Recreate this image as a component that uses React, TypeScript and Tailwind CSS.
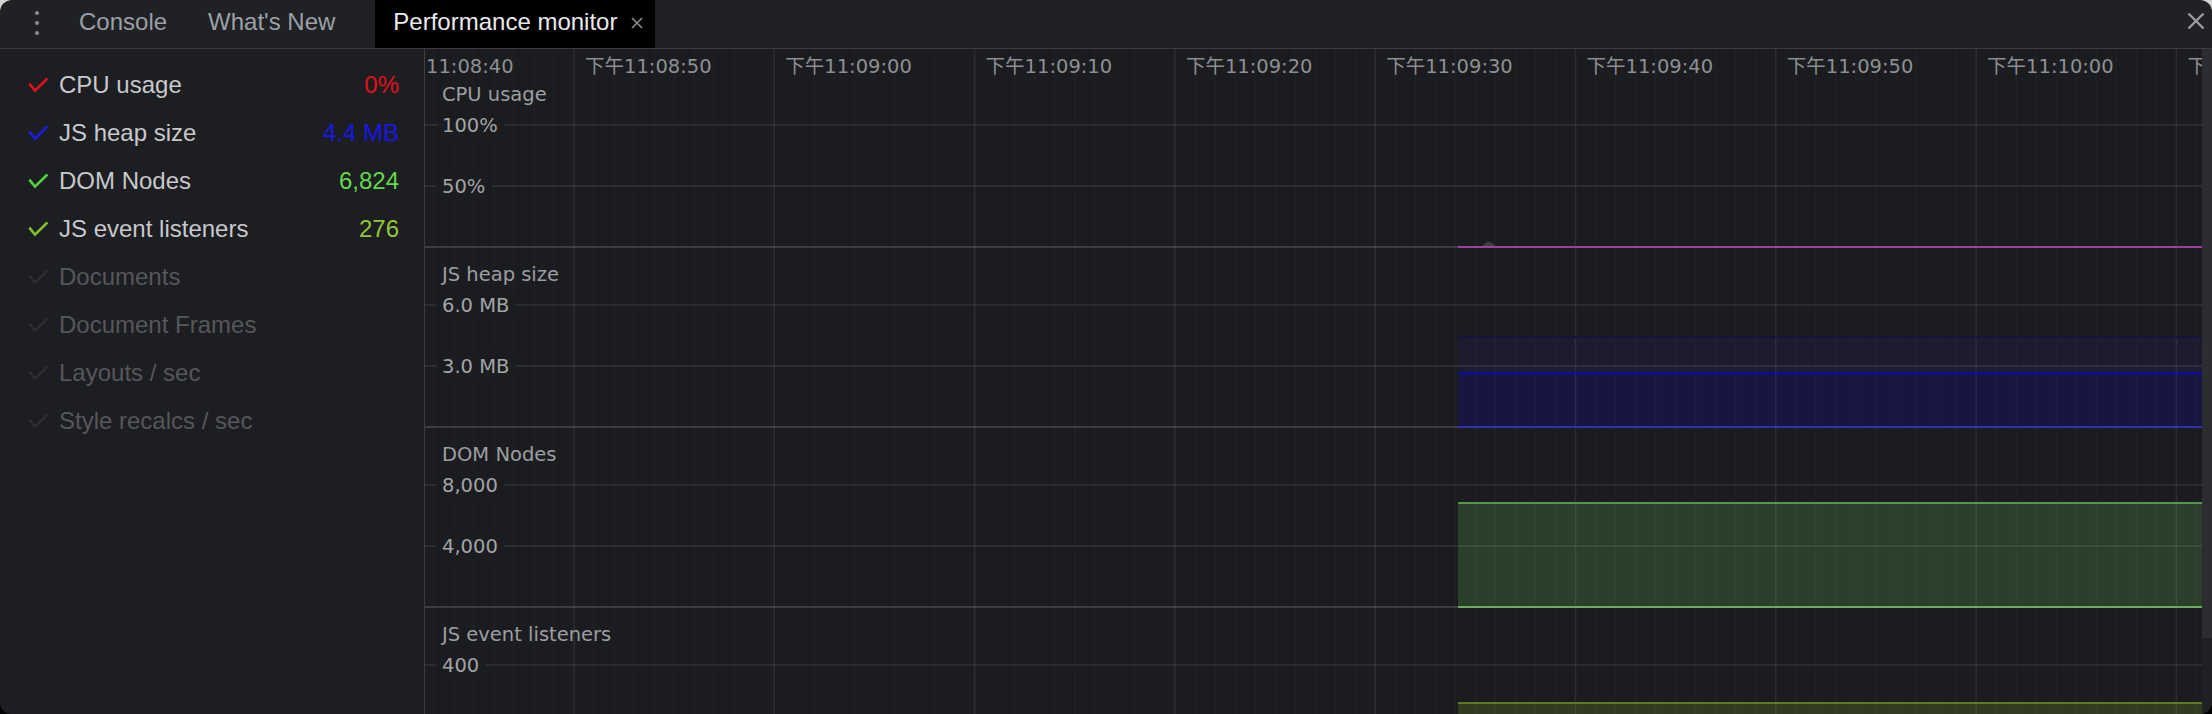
const metrics = [
  { label: "CPU usage", value: "0%", check: "#e3101a", color: "#e3101a" },
  { label: "JS heap size", value: "4.4 MB", check: "#1c1ce0", color: "#1717e6" },
  { label: "DOM Nodes", value: "6,824", check: "#4fd23d", color: "#62d94b" },
  { label: "JS event listeners", value: "276", check: "#83bd2c", color: "#93c73a" },
  { label: "Documents" },
  { label: "Document Frames" },
  { label: "Layouts / sec" },
  { label: "Style recalcs / sec" },
];

const sections = [
  { title: "CPU usage", top: 18, ticks: ["100%", "50%"] },
  { title: "JS heap size", top: 198, ticks: ["6.0 MB", "3.0 MB"] },
  { title: "DOM Nodes", top: 378, ticks: ["8,000", "4,000"] },
  { title: "JS event listeners", top: 558, ticks: ["400"] },
];

const W = 1777;
const H = 665;
const X0 = 1033; // where recording starts
const BG = "#1b1c1f";
const chartFont = "'DejaVu Sans','Noto Sans CJK SC',sans-serif";

function Check({ color }: { color: string }) {
  return (
    <svg width="20" height="16" viewBox="0 0 20 16" className="shrink-0">
      <path d="M1.3 6.6 L7 13.6 L19.4 1.4" fill="none" stroke={color} strokeWidth="2.6" strokeLinejoin="miter" />
    </svg>
  );
}

function timeLabel(k: number) {
  const t = 11 * 3600 + 8 * 60 + 50 + k * 10;
  const h = Math.floor(t / 3600);
  const m = Math.floor((t % 3600) / 60);
  const s = t % 60;
  const clock = `${h}:${String(m).padStart(2, "0")}:${String(s).padStart(2, "0")}`;
  return k < 0 ? clock : `下午${clock}`;
}

function Chart() {
  const minors: number[] = [];
  for (let j = -8; j < 84; j++) {
    const x = 149 + 20.03 * j;
    if (x > 0 && x < W && j % 10 !== 0) minors.push(x);
  }
  const majors: number[] = [];
  for (let k = -1; k <= 8; k++) majors.push(149 + 200.3 * k);

  return (
    <svg width="100%" height="100%" className="block">
      <rect x="0" y="0" width={W} height={H} fill={BG} />

      {/* data fills */}
      <rect x={X0} y={288} width={W - X0} height={36} fill="#1d1c2f" />
      <rect x={X0} y={324} width={W - X0} height={54} fill="#181641" />
      <rect x={X0} y={454} width={W - X0} height={104} fill="#2b402a" />
      <rect x={X0} y={654} width={W - X0} height={84} fill="#323a22" />

      {/* grid */}
      {minors.map((x) => (
        <line key={"n" + x} x1={x} x2={x} y1={0} y2={H} stroke="#ffffff" strokeOpacity="0.025" strokeWidth="1.5" />
      ))}
      {majors.map((x) => (
        <line key={"m" + x} x1={x} x2={x} y1={0} y2={H} stroke="#ffffff" strokeOpacity="0.08" strokeWidth="1.5" />
      ))}
      {sections.map((s) => (
        <g key={s.title}>
          <line x1={0} x2={W} y1={s.top + 58} y2={s.top + 58} stroke="#ffffff" strokeOpacity="0.07" strokeWidth="2" />
          <line x1={0} x2={W} y1={s.top + 119} y2={s.top + 119} stroke="#ffffff" strokeOpacity="0.07" strokeWidth="2" />
          <line x1={0} x2={W} y1={s.top + 180} y2={s.top + 180} stroke="#ffffff" strokeOpacity="0.15" strokeWidth="2" />
        </g>
      ))}

      {/* data lines */}
      <path d="M1058 198 A6 5 0 0 1 1070 198 Z" fill="#3d3e42" />
      <line x1={X0} x2={W} y1={198} y2={198} stroke="#9e3f9f" strokeWidth="2" />
      <line x1={X0} x2={W} y1={288} y2={288} stroke="#15133f" strokeWidth="2" />
      <line x1={X0} x2={W} y1={324} y2={324} stroke="#0d0da6" strokeWidth="2" />
      <line x1={X0} x2={W} y1={378} y2={378} stroke="#3131ad" strokeWidth="2" />
      <line x1={X0} x2={W} y1={454} y2={454} stroke="#57964d" strokeWidth="2" />
      <line x1={X0} x2={W} y1={558} y2={558} stroke="#6aab61" strokeWidth="2" />
      <line x1={X0} x2={W} y1={654} y2={654} stroke="#5d7b23" strokeWidth="2" />

      {/* time axis */}
      {majors.map((x, i) => (
        <text key={"t" + x} x={i === 0 ? 1 : x + 11} y={24} fontFamily={chartFont} fontSize="19.5" fill="#8e8f92">
          {timeLabel(i - 1)}
        </text>
      ))}

      {/* section labels */}
      {sections.map((s) => (
        <g key={"l" + s.title} fontFamily={chartFont} fontSize="19.5">
          <text x={17} y={s.top + 34} fill="#9d9ea1">
            {s.title}
          </text>
          {s.ticks.map((t, i) => (
            <text
              key={t}
              x={17}
              y={s.top + 58 + i * 61 + 7}
              fill="#a2a3a6"
              stroke={BG}
              strokeWidth="15"
              strokeLinejoin="round"
              paintOrder="stroke"
            >
              {t}
            </text>
          ))}
        </g>
      ))}
    </svg>
  );
}

export default function App() {
  return (
    <div className="h-[714px] w-[2212px] bg-[linear-gradient(#d4d4d4_50%,#000_50%)]">
      <div className="flex h-full w-full flex-col overflow-hidden rounded-[12px] bg-[#202124] font-['Liberation_Sans',Arial,sans-serif]">
        {/* tab bar */}
        <div className="flex h-[49px] shrink-0 items-stretch border-b border-[#3a3b3e] text-[24px] text-[#9aa0a6]">
          <div className="flex w-[74px] flex-col items-center justify-center gap-[6px] pb-[3px]">
            <span className="h-[4px] w-[4px] rounded-full bg-[#8b8c8f]" />
            <span className="h-[4px] w-[4px] rounded-full bg-[#8b8c8f]" />
            <span className="h-[4px] w-[4px] rounded-full bg-[#8b8c8f]" />
          </div>
          <div className="ml-[5px] flex items-center pb-[4px]">Console</div>
          <div className="ml-[41px] flex items-center pb-[4px]">What's New</div>
          <div className="ml-[40px] flex items-center bg-black pb-[4px] pl-[18px] pr-[12px] text-[#e8eaed]">
            <span>Performance monitor</span>
            <svg width="12" height="12" viewBox="0 0 12 12" className="ml-[14px] mt-[2px]">
              <path d="M1 1 L11 11 M11 1 L1 11" stroke="#8c8d90" strokeWidth="1.6" />
            </svg>
          </div>
          <div className="ml-auto mr-[7px] flex items-center pb-[6px]">
            <svg width="18" height="18" viewBox="0 0 18 18">
              <path d="M1.5 1.5 L16.5 16.5 M16.5 1.5 L1.5 16.5" stroke="#9c9da0" strokeWidth="2.4" />
            </svg>
          </div>
        </div>

        {/* body */}
        <div className="flex min-h-0 flex-1">
          <div className="w-[425px] shrink-0 border-r border-[#3c3d40] bg-[#1d1e21] pt-[12px] text-[24px]">
            {metrics.map((m) => (
              <div key={m.label} className="flex h-[48px] items-center pl-[28px] pr-[25px]">
                <Check color={m.check ?? "#2c2d30"} />
                <span className={"ml-[11px] " + (m.value ? "text-[#c8c9cc]" : "text-[#56575a]")}>{m.label}</span>
                {m.value && (
                  <span className="ml-auto" style={{ color: m.color }}>
                    {m.value}
                  </span>
                )}
              </div>
            ))}
          </div>
          <div className="min-w-0 flex-1 overflow-hidden">
            <Chart />
          </div>
          <div className="w-[10px] shrink-0 bg-[#202124]">
            <div className="h-[589px] bg-[#2c2d30]" />
          </div>
        </div>
      </div>
    </div>
  );
}
